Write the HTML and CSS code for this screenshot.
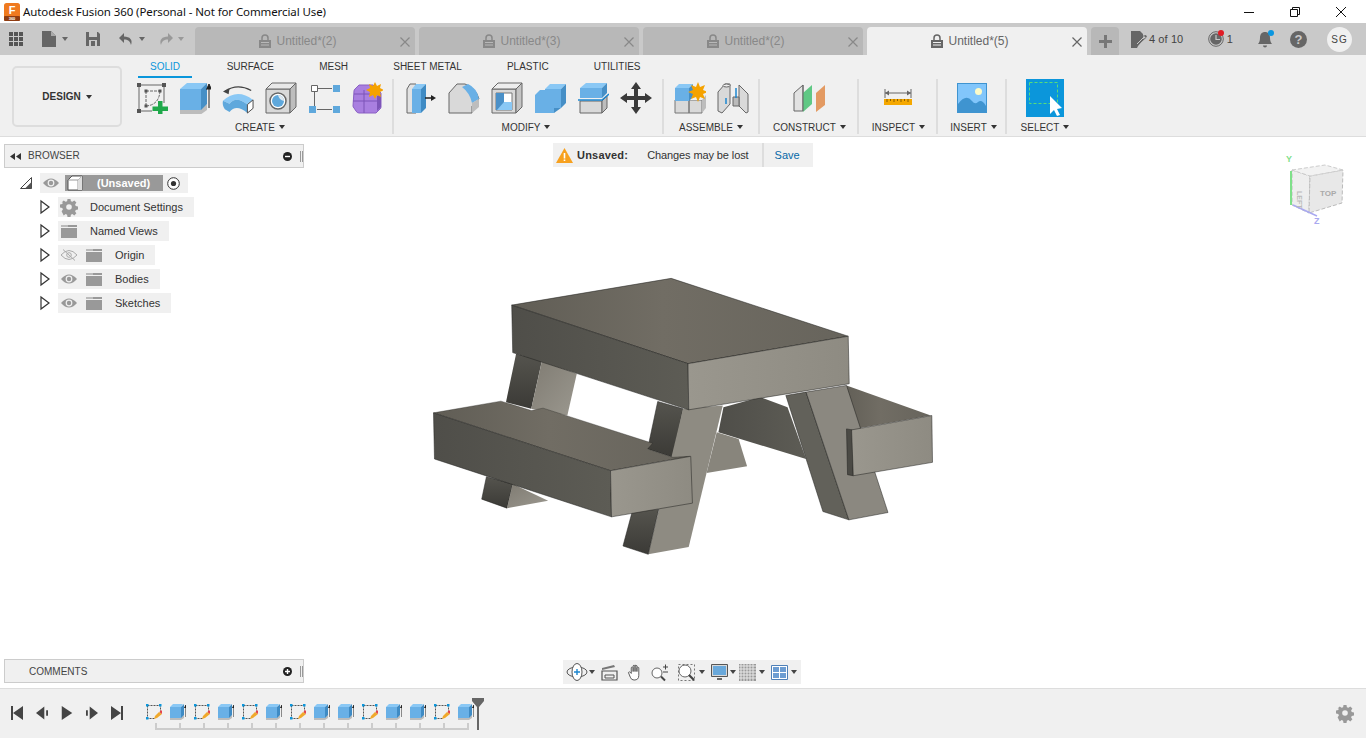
FILE: index.html
```html
<!DOCTYPE html>
<html lang="en">
<head>
<meta charset="utf-8">
<title>Autodesk Fusion 360</title>
<link rel="stylesheet" href="styles.css">
</head>
<body>
<svg class="defs" width="0" height="0" aria-hidden="true">
  <defs>
    <linearGradient id="gTop" x1="0" y1="0" x2="1" y2="0"><stop offset="0" stop-color="#605d55"/><stop offset=".45" stop-color="#716d64"/><stop offset="1" stop-color="#67645c"/></linearGradient>
    <linearGradient id="gSide" x1="0" y1="0" x2="1" y2="0"><stop offset="0" stop-color="#4f4e49"/><stop offset="1" stop-color="#5d5c55"/></linearGradient>
    <linearGradient id="gEnd" x1="0" y1="0" x2="1" y2="0"><stop offset="0" stop-color="#9a978e"/><stop offset="1" stop-color="#8e8b82"/></linearGradient>
    <linearGradient id="gLeg" x1="0" y1="0" x2="0" y2="1"><stop offset="0" stop-color="#55544e"/><stop offset="1" stop-color="#3b3a36"/></linearGradient>
    <linearGradient id="gLegL" x1="0" y1="0" x2="1" y2="1"><stop offset="0" stop-color="#7f7b72"/><stop offset="1" stop-color="#9b988f"/></linearGradient>
    <symbol id="i-sketch" viewBox="0 0 32 32">
      <path d="M3 3h25v18M3 3v26h13" fill="none" stroke="#666"/>
      <path d="M10 9h14M10 9v15M10 24Q23 23 24 9" fill="none" stroke="#666" stroke-dasharray="3 1"/>
      <path d="M1 1h4v4H1zM26 1h4v4h-4zM1 27h4v4H1zM8.500 7.500h3v3h-3zM22.500 7.500h3v3h-3zM8.500 22.500h3v3h-3z" fill="#555"/>
      <path d="M22 19h4.500v5.500H32V29h-5.500v5H22v-5h-5.500v-4.500H22z" fill="#1fa84a"/>
    </symbol>
    <symbol id="i-extrude" viewBox="0 0 32 32">
      <path d="M1 27h20l7-5v6l-7 5H1z" fill="#bcbcbc"/>
      <path d="M1 7h21v21H1z" fill="#69b0e6"/>
      <path d="M1 7l7-6h20l-6 6z" fill="#8ac8f5"/>
      <path d="M22 7l6-6v21l-6 6z" fill="#468fc6"/>
      <path d="M30 26V5M27.500 7.500L30 2l2.500 5.500" fill="#222" stroke="#222"/>
    </symbol>
    <symbol id="i-revolve" viewBox="0 0 34 32">
      <path d="M3 9Q16 0 31 8" fill="none" stroke="#444" stroke-width="1.400"/>
      <path d="M1 9l7-3-1 6z" fill="#444"/>
      <path d="M1 19Q16 5 33 18l-6 5Q15 13 8 22z" fill="#8ac8f5"/>
      <path d="M1 19l7 3Q15 13 27 23v9Q15 22 8 31l-5-3Q0 24 1 19z" fill="#5fa8dc"/>
      <path d="M27 23l6-5v9l-6 5z" fill="#fff" stroke="#444"/>
    </symbol>
    <symbol id="i-hole" viewBox="0 0 32 32">
      <path d="M1 7h24v24H1z" fill="#d9d9d9" stroke="#666"/>
      <path d="M1 7l6-6h24l-6 6z" fill="#e8e8e8" stroke="#666"/>
      <path d="M25 7l6-6v24l-6 6z" fill="#bdbdbd" stroke="#666"/>
      <circle cx="13" cy="19" r="8" fill="#fff" stroke="#666" stroke-width="1.500"/>
      <circle cx="13" cy="19" r="6" fill="#5fa8dc"/>
      <path d="M13 13a6 6 0 0 1 6 6 8 8 0 0 1-6-6z" fill="#dfe9f0"/>
    </symbol>
    <symbol id="i-form" viewBox="0 0 32 32">
      <path d="M3.500 3.500h6v6h-6z" fill="#fff" stroke="#666"/>
      <path d="M25 3h7v7h-7zM1 24h7v7H1zM25 24h7v7h-7z" fill="#5fa8dc"/>
      <path d="M10 6.500h14M6.500 10v14M9 27.500h15" stroke="#666" fill="none"/>
    </symbol>
    <symbol id="i-purple" viewBox="0 0 32 32">
      <path d="M3 9q0-1 1-2l4-4h14l8 8v14q0 1-1 2l-4 4H8q-2 0-3-2l-2-3q-1-1-1-2z" fill="#a97fe0" stroke="#8a60c4"/>
      <path d="M2 19h24M13 8v23M3 12h19" stroke="#7d55b8" fill="none"/>
      <path d="M26 14l4-2v13l-4 4z" fill="#7d55b8"/>
      <path d="M24 0l2 4 4-2-1 4 4 2-4 2 1 5-4-2-2 4-2-4-4 2 1-5-4-2 4-2-1-4 4 2z" fill="#f5a200"/>
    </symbol>
    <symbol id="i-press" viewBox="0 0 32 32">
      <path d="M2 7l3-5h6v29H2z" fill="#e2e2e2" stroke="#666"/>
      <path d="M7 7h9v24H7z" fill="#69b0e6"/>
      <path d="M7 7l4-5h10l-5 5z" fill="#8ac8f5"/>
      <path d="M16 7l5-5v24l-5 5z" fill="#3f8bc4"/>
      <path d="M20 16h7" stroke="#222" stroke-width="1.500"/>
      <path d="M26 13l5 3-5 3z" fill="#222"/>
    </symbol>
    <symbol id="i-fillet" viewBox="0 0 32 32">
      <path d="M1 11L9 2h8Q28 6 31 17l-7 7v7H1z" fill="#d9d9d9" stroke="#666"/>
      <path d="M14 5l6-3q9 4 11 15l-7 4Q22 11 14 5z" fill="#69b0e6"/>
      <path d="M24 21l7-4v8l-7 6z" fill="#bdbdbd"/>
    </symbol>
    <symbol id="i-shell" viewBox="0 0 32 32">
      <path d="M1 7h24v24H1z" fill="#d9d9d9" stroke="#666"/>
      <path d="M1 7l6-6h24l-6 6z" fill="#eee" stroke="#666"/>
      <path d="M25 7l6-6v24l-6 6z" fill="#c4c4c4" stroke="#666"/>
      <path d="M5 11h16v17H5z" fill="#fff" stroke="#777"/>
      <path d="M5 11h8v9h8v8H5z" fill="#4a90c8"/>
      <path d="M13 20h8v8H6z" fill="#8ac8f5"/>
    </symbol>
    <symbol id="i-combine" viewBox="0 0 32 32">
      <path d="M1 13l5-5h14v23H1z" fill="#69b0e6"/>
      <path d="M11 7l5-5h16l-5 5z" fill="#8ac8f5"/>
      <path d="M11 7h16v19H11z" fill="#69b0e6"/>
      <path d="M27 7l5-5v19l-5 5zM20 26h7l-7 5z" fill="#468fc6"/>
    </symbol>
    <symbol id="i-split" viewBox="0 0 32 32">
      <path d="M3 19h22v12H3z" fill="#d9d9d9" stroke="#666"/>
      <path d="M25 19l5-5v12l-5 5z" fill="#bdbdbd" stroke="#666"/>
      <path d="M3 6h22v10H3z" fill="#69b0e6"/>
      <path d="M3 6l6-5h21l-5 5z" fill="#8ac8f5"/>
      <path d="M25 6l5-5v10l-5 5z" fill="#468fc6"/>
      <path d="M1 18h24l7-6" fill="none" stroke="#1c86cf" stroke-width="1.500"/>
    </symbol>
    <symbol id="i-move" viewBox="0 0 32 32">
      <path d="M16 0l5 7h-3v7h7v-3l7 5-7 5v-3h-7v7h3l-5 7-5-7h3v-7H7v3l-7-5 7-5v3h7V7h-3z" fill="#3a3a3a"/>
    </symbol>
    <symbol id="i-component" viewBox="0 0 32 32">
      <path d="M1 18h14v13H1zM15 18h13v13H15z" fill="#d9d9d9" stroke="#777"/>
      <path d="M15 18l4-5h13l-4 5z" fill="#eee"/>
      <path d="M28 18l4-5v13l-4 5z" fill="#bdbdbd"/>
      <path d="M1 6h14v13H1z" fill="#69b0e6"/>
      <path d="M1 6l4-4h14l-4 4z" fill="#8ac8f5"/>
      <path d="M15 6l4-4v13l-4 4z" fill="#468fc6"/>
      <path d="M24 0l2 5 5-2-2 5 5 2-5 2 2 5-5-2-2 5-2-5-5 2 2-5-5-2 5-2-2-5 5 2z" fill="#f5a200"/>
    </symbol>
    <symbol id="i-joint" viewBox="0 0 32 32">
      <path d="M1 10L8 2h5v20l-8 9-4-2z" fill="#d9d9d9" stroke="#666"/>
      <path d="M22 3l9 9v18l-2 1-7-7z" fill="#d9d9d9" stroke="#666"/>
      <ellipse cx="9.500" cy="3.500" rx="3.500" ry="1.500" fill="#eee" stroke="#666"/>
      <path d="M16 15h6v9h-6z" fill="#bbb" stroke="#666"/>
      <path d="M9 16v6M19 6v10" stroke="#1c86cf" stroke-width="1.500"/>
    </symbol>
    <symbol id="i-plane" viewBox="0 0 32 32">
      <path d="M1 11l9-8v26H1z" fill="#e2e2e2" stroke="#666"/>
      <path d="M10 11l9-8v19l-9 8z" fill="#5fc884"/>
      <path d="M23 11l9-8v20l-9 7z" fill="#e39a62"/>
      <path d="M10 3v26" stroke="#666"/>
    </symbol>
    <symbol id="i-measure" viewBox="0 0 28 20">
      <path d="M1 1v9M27 1v9M1 5h26" stroke="#666" fill="none"/>
      <path d="M1 5l4-2.500v5zM27 5l-4-2.500v5z" fill="#666"/>
      <path d="M0 11h28v6H0z" fill="#f5a800"/>
      <path d="M3 11v3M6.500 11v2M10 11v3M13.500 11v2M17 11v3M20.500 11v2M24 11v3" stroke="#8a5c00"/>
    </symbol>
    <symbol id="i-image" viewBox="0 0 30 30">
      <path d="M0 0h30v30H0z" fill="#3f94d0"/>
      <path d="M1 1h28v28H1z" fill="#82c6fb"/>
      <circle cx="21.500" cy="8.500" r="3.500" fill="#fdfbc8"/>
      <path d="M1 21q8-11 14-3 3 4 6 1 4-3 8 4v6H1z" fill="#3f94d0"/>
    </symbol>
    <symbol id="i-select" viewBox="0 0 38 38">
      <path d="M0 0h38v38H0z" fill="#0b96db"/>
      <path d="M3.500 3.500h28v21h-28z" fill="none" stroke="#58dd7a" stroke-dasharray="3 2"/>
      <path d="M24 17l12 12-5 1 3 6-3 1-3-6-4 4z" fill="#fff"/>
    </symbol>
    <symbol id="t-sketch" viewBox="0 0 16 16">
      <path d="M1.500 1.500h13v7M1.500 1.500v13h7" fill="none" stroke="#555" stroke-dasharray="2 1"/>
      <path d="M0 0h2.500v2.500H0zM13 0h2.500v2.500H13zM0 13h2.500v2.500H0z" fill="#0b96db"/>
      <path d="M8 15l1-3 4-4 3 2-5 4z" fill="#f0a92c"/>
      <path d="M13.500 8l2.500 2 1-2-2-2z" fill="#e8434b"/>
    </symbol>
    <symbol id="t-extrude" viewBox="0 0 16 16">
      <path d="M0 13h11l3-2v3l-3 2H0z" fill="#bcbcbc"/>
      <path d="M0 3h11v11H0z" fill="#69b0e6"/>
      <path d="M0 3l3-3h10l-2 3z" fill="#8ac8f5"/>
      <path d="M11 3l3-3v11l-3 3z" fill="#3f8bc4"/>
      <path d="M16 13V2M14.500 4L16 1l1.500 3" fill="#222" stroke="#222"/>
    </symbol>
  </defs>
</svg>

<header class="titlebar">
  <svg class="applogo" viewBox="0 0 18 18"><rect x="1" y="0" width="16" height="18" rx="2.500" fill="#ef7a1f"/><rect x="1" y="13" width="16" height="5" rx="1" fill="#8e3c12"/><text x="9" y="11" class="applogo-f">F</text><text x="9" y="17" class="applogo-n">360</text></svg>
  <span class="titletext">Autodesk Fusion 360 (Personal - Not for Commercial Use)</span>
  <div class="winctl">
    <svg viewBox="0 0 10 10"><path d="M0 5.500h10" stroke="#111"/></svg>
    <svg viewBox="0 0 10 10"><path d="M.5 2.500h7v7h-7zM2.500 2.500v-2h7v7h-2" fill="none" stroke="#111"/></svg>
    <svg viewBox="0 0 10 10"><path d="M0 0l10 10M10 0L0 10" stroke="#111"/></svg>
  </div>
</header>

<nav class="tabbar">
  <div class="apptools">
    <svg class="tool-apps" viewBox="0 0 14 14"><path d="M0 0h4v4H0zM5 0h4v4H5zM10 0h4v4h-4zM0 5h4v4H0zM5 5h4v4H5zM10 5h4v4h-4zM0 10h4v4H0zM5 10h4v4H5zM10 10h4v4h-4z" fill="#555"/></svg>
    <svg class="tool-file" viewBox="0 0 14 16"><path d="M0 0h9l5 5v11H0z" fill="#666"/><path d="M9 0l5 5H9z" fill="#aaa"/></svg>
    <i class="caret caret-tool"></i>
    <svg class="tool-save" viewBox="0 0 14 14"><path d="M0 0h12l2 2v12H0z" fill="#666"/><path d="M3 0h8v5H3zM3 8h8v6H3z" fill="#c9c9c9"/><path d="M5 9h4v5H5z" fill="#666"/></svg>
    <svg class="tool-undo" viewBox="0 0 14 14"><path d="M5 1L0 6l5 5V7.500c4 0 6 1.500 7 5.500 2-5-1-8.500-7-8.500z" fill="#666"/></svg>
    <i class="caret caret-tool caret-undo"></i>
    <svg class="tool-redo" viewBox="0 0 14 14"><path d="M9 1l5 5-5 5V7.500c-4 0-6 1.500-7 5.500-2-5 1-8.500 7-8.500z" fill="#999"/></svg>
    <i class="caret caret-tool caret-redo"></i>
  </div>
  <div class="doctabs">
    <div class="doctab"><svg class="lock" viewBox="0 0 12 14"><path d="M3 6V4a3 3 0 0 1 6 0v2" fill="none" stroke="currentColor" stroke-width="1.500"/><path d="M0 6h12v8H0z" fill="currentColor"/><path d="M2 8.500h8M2 11h8" stroke="#b8b8b8"/></svg><span>Untitled*(2)</span><svg class="tabclose" viewBox="0 0 10 10"><path d="M.5.500l9 9M9.500.500l-9 9" stroke="currentColor" stroke-width="1.200"/></svg></div>
    <div class="doctab"><svg class="lock" viewBox="0 0 12 14"><path d="M3 6V4a3 3 0 0 1 6 0v2" fill="none" stroke="currentColor" stroke-width="1.500"/><path d="M0 6h12v8H0z" fill="currentColor"/><path d="M2 8.500h8M2 11h8" stroke="#b8b8b8"/></svg><span>Untitled*(3)</span><svg class="tabclose" viewBox="0 0 10 10"><path d="M.5.500l9 9M9.500.500l-9 9" stroke="currentColor" stroke-width="1.200"/></svg></div>
    <div class="doctab"><svg class="lock" viewBox="0 0 12 14"><path d="M3 6V4a3 3 0 0 1 6 0v2" fill="none" stroke="currentColor" stroke-width="1.500"/><path d="M0 6h12v8H0z" fill="currentColor"/><path d="M2 8.500h8M2 11h8" stroke="#b8b8b8"/></svg><span>Untitled*(2)</span><svg class="tabclose" viewBox="0 0 10 10"><path d="M.5.500l9 9M9.500.500l-9 9" stroke="currentColor" stroke-width="1.200"/></svg></div>
    <div class="doctab is-active"><svg class="lock" viewBox="0 0 12 14"><path d="M3 6V4a3 3 0 0 1 6 0v2" fill="none" stroke="currentColor" stroke-width="1.500"/><path d="M0 6h12v8H0z" fill="currentColor"/><path d="M2 8.500h8M2 11h8" stroke="#f0f0f0"/></svg><span>Untitled*(5)</span><svg class="tabclose" viewBox="0 0 10 10"><path d="M.5.500l9 9M9.500.500l-9 9" stroke="currentColor" stroke-width="1.200"/></svg></div>
    <div class="newtab"><svg viewBox="0 0 13 13"><path d="M5 0h3v5h5v3H8v5H5V8H0V5h5z" fill="#777"/></svg></div>
  </div>
  <div class="status">
    <svg class="st-docs" viewBox="0 0 16 17"><path d="M0 0h9l3 3v6l-5 6-1 2H0z" fill="#666"/><path d="M11 5l1 3 4-2-1-2zM5 15l1-4 7-6 2 2-7 6z" fill="#666"/><path d="M6 13l6-6" stroke="#c9c9c9"/></svg>
    <span class="st-count">4 of 10</span>
    <div class="st-clock"><svg viewBox="0 0 16 16"><circle cx="8" cy="8" r="7.300" fill="none" stroke="#666"/><circle cx="8" cy="8" r="5.800" fill="#666"/><path d="M8 4v4.500h4" stroke="#c9c9c9" fill="none" stroke-width="1.200"/></svg><i class="dot dot-red"></i></div>
    <span class="st-one">1</span>
    <div class="st-bell"><svg viewBox="0 0 15 17"><path d="M7 1c3 0 5 2 5 6 0 3 1 5 2 6H0c1-1 2-3 2-6 0-4 2-6 5-6z" fill="#666"/><path d="M5 14.500h4c0 1-1 2-2 2s-2-1-2-2z" fill="#666"/></svg><i class="dot dot-blue"></i></div>
    <svg class="st-help" viewBox="0 0 17 17"><circle cx="8.500" cy="8.500" r="8.500" fill="#666"/><text x="8.500" y="13" class="help-q">?</text></svg>
    <div class="avatar">SG</div>
  </div>
</nav>

<section class="ribbon">
  <button class="design">DESIGN<i class="caret caret-design"></i></button>
  <div class="toolarea">
    <div class="rtabs">
      <span class="rtab is-active">SOLID</span><span class="rtab rtab-second">SURFACE</span><span class="rtab">MESH</span><span class="rtab">SHEET METAL</span><span class="rtab">PLASTIC</span><span class="rtab">UTILITIES</span>
    </div>
    <div class="groups">
      <div class="group g-create"><div class="icons">
        <svg class="ic"><use href="#i-sketch"/></svg><svg class="ic"><use href="#i-extrude"/></svg><svg class="ic"><use href="#i-revolve"/></svg><svg class="ic"><use href="#i-hole"/></svg><svg class="ic"><use href="#i-form"/></svg><svg class="ic"><use href="#i-purple"/></svg>
      </div><div class="glabel">CREATE<i class="caret"></i></div></div>
      <div class="group g-modify"><div class="icons">
        <svg class="ic"><use href="#i-press"/></svg><svg class="ic"><use href="#i-fillet"/></svg><svg class="ic"><use href="#i-shell"/></svg><svg class="ic"><use href="#i-combine"/></svg><svg class="ic"><use href="#i-split"/></svg><svg class="ic"><use href="#i-move"/></svg>
      </div><div class="glabel">MODIFY<i class="caret"></i></div></div>
      <div class="group g-assemble"><div class="icons">
        <svg class="ic"><use href="#i-component"/></svg><svg class="ic"><use href="#i-joint"/></svg>
      </div><div class="glabel">ASSEMBLE<i class="caret"></i></div></div>
      <div class="group g-construct"><div class="icons">
        <svg class="ic"><use href="#i-plane"/></svg>
      </div><div class="glabel">CONSTRUCT<i class="caret"></i></div></div>
      <div class="group g-inspect"><div class="icons">
        <svg class="ic-measure"><use href="#i-measure"/></svg>
      </div><div class="glabel">INSPECT<i class="caret"></i></div></div>
      <div class="group g-insert"><div class="icons">
        <svg class="ic-image"><use href="#i-image"/></svg>
      </div><div class="glabel">INSERT<i class="caret"></i></div></div>
      <div class="group g-select"><div class="icons">
        <svg class="ic-select"><use href="#i-select"/></svg>
      </div><div class="glabel">SELECT<i class="caret"></i></div></div>
    </div>
  </div>
</section>

<main class="canvas">
  <aside class="browser">
    <div class="panelhead">
      <svg class="collapse" viewBox="0 0 11 7"><path d="M5 0v7L0 3.500zM11 0v7L6 3.500z" fill="#333"/></svg>
      <span class="panelname">BROWSER</span>
      <svg class="pm" viewBox="0 0 9 9"><circle cx="4.500" cy="4.500" r="4.500" fill="#222"/><path d="M2 4.500h5" stroke="#fff" stroke-width="1.400"/></svg>
      <i class="grip"></i>
    </div>
    <ul class="tree">
      <li class="node node-root">
        <svg class="tri-open" viewBox="0 0 12 12"><path d="M.5 11.500l11-11v11z" fill="#fff" stroke="#444"/><path d="M5 11.500l6.500-6.500v6.500z" fill="#555"/></svg>
        <div class="rootrow">
          <svg class="eye" viewBox="0 0 16 10"><path d="M0 5q8-9 16 0-8 9-16 0z" fill="#999"/><circle cx="8" cy="5" r="3.400" fill="#f0f0f0"/><circle cx="8" cy="5" r="2.200" fill="#999"/></svg>
          <div class="rootname">
            <svg class="cube" viewBox="0 0 16 16"><path d="M1 5l4-4h10v14H1z" fill="#fff" stroke="#555"/><path d="M1 5h10v10M11 5l4-4" fill="none" stroke="#999"/><path d="M11 5l4-4v14h-4z" fill="#ddd"/></svg>
            <b>(Unsaved)</b>
          </div>
          <svg class="radio" viewBox="0 0 13 13"><circle cx="6.500" cy="6.500" r="5.800" fill="#fff" stroke="#333"/><circle cx="6.500" cy="6.500" r="2.600" fill="#333"/></svg>
        </div>
      </li>
      <li class="node">
        <svg class="tri" viewBox="0 0 10 14"><path d="M1 1l8 6-8 6z" fill="#fff" stroke="#333" stroke-width="1.200"/></svg>
        <div class="row"><svg class="gear" viewBox="0 0 16 16"><path d="M6.500 0h3l.4 2.200 1.500.6L13.300 1.500l2.100 2.100-1.300 1.900.6 1.500 2.300.5v3l-2.300.4-.6 1.500 1.300 1.900-2.100 2.100-1.900-1.300-1.500.6-.4 2.300h-3l-.4-2.300-1.500-.6-1.900 1.300L.6 12.300l1.300-1.900-.6-1.500L-1 8.500v-3l2.300-.5.6-1.500L.6 3.600 2.700 1.500 4.600 2.800l1.500-.6z" fill="#999"/><circle cx="8" cy="8" r="2.800" fill="#f0f0f0"/></svg><span class="rowtext">Document Settings</span></div>
      </li>
      <li class="node">
        <svg class="tri" viewBox="0 0 10 14"><path d="M1 1l8 6-8 6z" fill="#fff" stroke="#333" stroke-width="1.200"/></svg>
        <div class="row"><svg class="folder" viewBox="0 0 16 13"><path d="M0 0h7v2H0z" fill="#bbb"/><path d="M0 3h16v10H0z" fill="#999"/><path d="M7 0h9v2H7z" fill="#999"/></svg><span class="rowtext">Named Views</span></div>
      </li>
      <li class="node">
        <svg class="tri" viewBox="0 0 10 14"><path d="M1 1l8 6-8 6z" fill="#fff" stroke="#333" stroke-width="1.200"/></svg>
        <div class="row"><svg class="eye eye-off" viewBox="0 0 16 12"><path d="M0 6q8-9 16 0-8 9-16 0z" fill="none" stroke="#aaa"/><circle cx="8" cy="6" r="2.300" fill="none" stroke="#aaa"/><path d="M2 .5l12 11" stroke="#aaa"/></svg><svg class="folder folder-in" viewBox="0 0 16 13"><path d="M0 0h7v2H0z" fill="#bbb"/><path d="M0 3h16v10H0z" fill="#999"/><path d="M7 0h9v2H7z" fill="#999"/></svg><span class="rowtext">Origin</span></div>
      </li>
      <li class="node">
        <svg class="tri" viewBox="0 0 10 14"><path d="M1 1l8 6-8 6z" fill="#fff" stroke="#333" stroke-width="1.200"/></svg>
        <div class="row"><svg class="eye" viewBox="0 0 16 10"><path d="M0 5q8-9 16 0-8 9-16 0z" fill="#999"/><circle cx="8" cy="5" r="3.400" fill="#f0f0f0"/><circle cx="8" cy="5" r="2.200" fill="#999"/></svg><svg class="folder folder-in" viewBox="0 0 16 13"><path d="M0 0h7v2H0z" fill="#bbb"/><path d="M0 3h16v10H0z" fill="#999"/><path d="M7 0h9v2H7z" fill="#999"/></svg><span class="rowtext">Bodies</span></div>
      </li>
      <li class="node">
        <svg class="tri" viewBox="0 0 10 14"><path d="M1 1l8 6-8 6z" fill="#fff" stroke="#333" stroke-width="1.200"/></svg>
        <div class="row"><svg class="eye" viewBox="0 0 16 10"><path d="M0 5q8-9 16 0-8 9-16 0z" fill="#999"/><circle cx="8" cy="5" r="3.400" fill="#f0f0f0"/><circle cx="8" cy="5" r="2.200" fill="#999"/></svg><svg class="folder folder-in" viewBox="0 0 16 13"><path d="M0 0h7v2H0z" fill="#bbb"/><path d="M0 3h16v10H0z" fill="#999"/><path d="M7 0h9v2H7z" fill="#999"/></svg><span class="rowtext">Sketches</span></div>
      </li>
    </ul>
  </aside>

  <div class="notice">
    <svg class="warn" viewBox="0 0 17 15"><path d="M8.500 0L17 15H0z" fill="#f7a11f"/><path d="M7.700 5h1.600v5.500H7.700zM7.700 11.500h1.600v1.600H7.700z" fill="#fff"/></svg>
    <b class="n-title">Unsaved:</b>
    <span class="n-msg">Changes may be lost</span>
    <span class="n-save">Save</span>
  </div>

  <svg class="model" viewBox="0 0 1563 855" preserveAspectRatio="none" aria-label="Picnic table model">
    <g stroke="#1f1f1c" stroke-width="1.500" stroke-linejoin="round">
      <path d="M285 250l77 20-32 145-75-20z" fill="url(#gLeg)" stroke="none"/>
      <path d="M362 270l103 40-28 125-107-20z" fill="url(#gLegL)" stroke="none"/>
      <path d="M197 618l78 22-17 72-75-27z" fill="url(#gLeg)"/>
      <path d="M275 640l105 50-122 22z" fill="url(#gLegL)" stroke="none"/>
      <path d="M1265 345l250 90-250 45-20-60z" fill="url(#gTop)" stroke="none"/>
      <path d="M900 410l110-30 80 30 55 155-260-80z" fill="url(#gSide)" stroke="none"/>
      <path d="M945 505l25 82-120 20 30-122z" fill="#88857c" stroke="none"/>
      <path d="M1085 375l60-10 127 382-77-25z" fill="#62615a"/>
      <path d="M1145 365l120-20 123 380-116 22z" fill="#8b8880"/>
      <path d="M1265 475l17 3 3 137-17-3z" fill="#4b4a45"/>
      <path d="M1280 478l238-43 2 140-235 40z" fill="url(#gEnd)"/>
      <path d="M705 393l75 22-30 145-75-25z" fill="url(#gLeg)"/>
      <path d="M780 415l118-10-101 423-120 22z" fill="#8e8b82" stroke="none"/>
      <path d="M630 720l78-5-31 135-75-25z" fill="url(#gLeg)"/>
      <path d="M40 427l200-35 90 28 35-7 325 105-15 17 75 25 50-3-235 43z" fill="url(#gTop)" stroke-width="1"/>
      <path d="M40 427l525 173 3 138L43 565z" fill="url(#gSide)"/>
      <path d="M565 600l238-43 5 140-240 41z" fill="url(#gEnd)"/>
      <path d="M272 105L745 25l525 173-475 82z" fill="url(#gTop)"/>
      <path d="M272 105l523 175 2 138-522-171z" fill="url(#gSide)"/>
      <path d="M795 280l475-82 3 142-476 78z" fill="url(#gEnd)"/>
    </g>
  </svg>

  <svg class="viewcube" viewBox="0 0 90 80" aria-label="View cube">
    <path d="M22 20l18 6-1 37-17-8z" fill="#eee" stroke="#bbb" stroke-dasharray="4 2"/>
    <path d="M40 26l33-6-1 33-33 10z" fill="#e8e8e8" stroke="#bbb" stroke-dasharray="4 2"/>
    <path d="M22 20l33-5 18 5-33 6z" fill="#f2f2f2" stroke="#ccc" stroke-dasharray="4 2"/>
    <path d="M21 21v34" stroke="#7fe08a" stroke-width="2"/>
    <path d="M23 55l24 11" stroke="#a9a9f0" stroke-width="1.500"/>
    <text x="50" y="46" class="vc-top">TOP</text>
    <text x="29" y="41" class="vc-left">LEFT</text>
    <text x="16" y="12" class="vc-y">Y</text>
    <text x="44" y="74" class="vc-z">Z</text>
  </svg>

  <div class="navbar">
    <svg class="nv nv-orbit" viewBox="0 0 22 18"><ellipse cx="11" cy="9" rx="10" ry="5" fill="none" stroke="#555"/><ellipse cx="11" cy="9" rx="5" ry="8.500" fill="#fff" stroke="#555"/><path d="M8 9h6M11 6v6" stroke="#1c86cf" stroke-width="1.400"/></svg><i class="caret nc nc-orbit"></i>
    <svg class="nv nv-pan" viewBox="0 0 17 17"><path d="M1 7h15v9H1z" fill="none" stroke="#555" stroke-width="1.200"/><path d="M4 11h9v3H4z" fill="none" stroke="#555"/><path d="M1 6l13-3-1-2L1 4z" fill="#777"/></svg>
    <svg class="nv nv-hand" viewBox="0 0 17 18"><path d="M4 10V4q1-2 2 0v4V2q1-2 2 0v6V2q1-2 2 0v6V4q1-2 2 0v8q0 5-5 5-3 0-4-3L1 9q1-2 3 1z" fill="#fff" stroke="#555"/></svg>
    <svg class="nv nv-zoom" viewBox="0 0 17 17"><circle cx="6" cy="9" r="5" fill="#fff" stroke="#666"/><path d="M10 12.500l4 4" stroke="#444" stroke-width="2"/><path d="M12 3h5M14.500.500v5M12 8h5" stroke="#444"/></svg>
    <svg class="nv nv-fit" viewBox="0 0 17 17"><path d="M.5.500h16v16H.5z" fill="none" stroke="#777" stroke-dasharray="2 2"/><circle cx="7" cy="7" r="6" fill="#fff" stroke="#666"/><path d="M11 11l5 5" stroke="#444" stroke-width="2.200"/></svg><i class="caret nc nc-fit"></i>
    <svg class="nv nv-disp" viewBox="0 0 17 17"><path d="M.5.500h16v12H.5z" fill="#d8d8d8" stroke="#555"/><path d="M2 2h13v9H2z" fill="#69a8da"/><path d="M6 14h5v2H6z" fill="#666"/></svg><i class="caret nc nc-disp"></i>
    <svg class="nv nv-grid" viewBox="0 0 17 17"><path d="M0 0h17v17H0z" fill="#999"/><path d="M2 0v17M5 0v17M8 0v17M11 0v17M14 0v17M0 2h17M0 5h17M0 8h17M0 11h17M0 14h17" stroke="#e8e8e8"/></svg><i class="caret nc nc-grid"></i>
    <svg class="nv nv-views" viewBox="0 0 17 15"><path d="M.5.500h16v14H.5z" fill="#fff" stroke="#4f80b8"/><path d="M2 2h6v5H2zM9 2h6v5H9zM2 8h6v5H2zM9 8h6v5H9z" fill="#6d9dd2"/></svg><i class="caret nc nc-views"></i>
  </div>

  <aside class="comments">
    <div class="panelhead panelhead-c">
      <span class="panelname">COMMENTS</span>
      <svg class="pm" viewBox="0 0 9 9"><circle cx="4.500" cy="4.500" r="4.500" fill="#222"/><path d="M2 4.500h5M4.500 2v5" stroke="#fff" stroke-width="1.400"/></svg>
      <i class="grip"></i>
    </div>
  </aside>
</main>

<footer class="timeline">
  <div class="playback">
    <svg viewBox="0 0 12 14"><path d="M0 0h2v14H0zM12 0v14L2 7z" fill="#444"/></svg>
    <svg viewBox="0 0 13 14"><path d="M9 0v14L0 7zM11 4h2v6h-2z" fill="#444"/></svg>
    <svg viewBox="0 0 12 16"><path d="M0 0l12 8-12 8z" fill="#444"/></svg>
    <svg viewBox="0 0 13 14"><path d="M4 0v14l9-7zM0 4h2v6H0z" fill="#444"/></svg>
    <svg viewBox="0 0 12 14"><path d="M10 0h2v14h-2zM0 0v14l10-7z" fill="#444"/></svg>
  </div>
  <div class="track">
    <div class="steps">
      <svg class="step"><use href="#t-sketch"/></svg><svg class="step"><use href="#t-extrude"/></svg><svg class="step"><use href="#t-sketch"/></svg><svg class="step"><use href="#t-extrude"/></svg><svg class="step"><use href="#t-sketch"/></svg><svg class="step"><use href="#t-extrude"/></svg><svg class="step"><use href="#t-sketch"/></svg><svg class="step"><use href="#t-extrude"/></svg><svg class="step"><use href="#t-extrude"/></svg><svg class="step"><use href="#t-sketch"/></svg><svg class="step"><use href="#t-extrude"/></svg><svg class="step"><use href="#t-extrude"/></svg><svg class="step"><use href="#t-sketch"/></svg><svg class="step"><use href="#t-extrude"/></svg>
    </div>
    <div class="rail"><i></i><i></i><i></i><i></i><i></i><i></i><i></i><i></i><i></i><i></i><i></i><i></i><i></i></div>
    <svg class="marker" viewBox="0 0 12 32"><path d="M0 0h12v3L7 9v23H5V9L0 3z" fill="#666"/></svg>
  </div>
  <svg class="tl-gear" viewBox="-1 -1 18 18"><path d="M6.500 0h3l.4 2.200 1.500.6L13.300 1.500l2.100 2.100-1.300 1.900.6 1.500 2.300.5v3l-2.300.4-.6 1.500 1.300 1.900-2.100 2.100-1.900-1.300-1.500.6-.4 2.300h-3l-.4-2.300-1.500-.6-1.900 1.300L.6 12.300l1.300-1.900-.6-1.500L-1 8.500v-3l2.300-.5.6-1.500L.6 3.600 2.700 1.500 4.600 2.800l1.500-.6z" fill="#999"/><circle cx="8" cy="8" r="2.800" fill="#f0f0f0"/></svg>
</footer>
</body>
</html>
```

FILE: styles.css
```css
* { box-sizing: border-box; }
html, body { margin: 0; height: 100%; }
body {
  width: 1366px;
  height: 738px;
  overflow: hidden;
  display: flex;
  flex-direction: column;
  background: #fff;
  color: #333;
  font-family: "Liberation Sans", Arial, sans-serif;
  font-size: 11px;
}
.defs { position: absolute; }
svg { display: block; flex: none; overflow: visible; }
i { display: block; flex: none; }

.caret {
  display: inline-block;
  width: 0;
  height: 0;
  border-left: 3.500px solid transparent;
  border-right: 3.500px solid transparent;
  border-top: 4px solid #333;
}

/* Title bar */
.titlebar { height: 23px; flex: none; display: flex; align-items: center; background: #fff; padding-left: 3px; }
.applogo { width: 18px; height: 18px; }
.applogo-f { font: bold 11px "Liberation Sans", sans-serif; fill: #fff; text-anchor: middle; }
.applogo-n { font: bold 4px "Liberation Sans", sans-serif; fill: #fff; text-anchor: middle; }
.titletext { margin-left: 2px; font: 11.500px "Noto Sans", sans-serif; color: #111; letter-spacing: -.1px; white-space: nowrap; }
.winctl { margin-left: auto; display: flex; gap: 36px; padding-right: 20px; }
.winctl svg { width: 10px; height: 10px; }

/* Tab bar */
.tabbar { height: 32px; flex: none; display: flex; background: #c9c9c9; }
.apptools { width: 195px; flex: none; display: flex; align-items: center; padding-left: 9px; }
.tool-apps { width: 14px; height: 14px; }
.tool-file { width: 14px; height: 16px; margin-left: 19px; }
.caret-tool { border-top-color: #666; margin-left: 6px; }
.tool-save { width: 14px; height: 14px; margin-left: 18px; }
.tool-undo { width: 14px; height: 14px; margin-left: 19px; }
.caret-undo { margin-left: 6px; }
.tool-redo { width: 14px; height: 14px; margin-left: 14px; }
.caret-redo { margin-left: 5px; border-top-color: #999; }

.doctabs { display: flex; align-items: flex-end; gap: 4px; }
.doctab {
  position: relative;
  width: 220px;
  height: 28px;
  display: flex;
  align-items: center;
  justify-content: center;
  gap: 5px;
  padding-right: 14px;
  background: #b8b8b8;
  color: #888;
  border-radius: 4px 4px 0 0;
  font-size: 12px;
}
.doctab.is-active { background: #f0f0f0; color: #666; }
.lock { width: 12px; height: 14px; }
.tabclose { position: absolute; right: 5px; top: 10px; width: 10px; height: 10px; }
.newtab { width: 28px; height: 28px; background: #b8b8b8; border-radius: 4px 4px 0 0; display: flex; align-items: center; justify-content: center; }
.newtab svg { width: 13px; height: 13px; }

.status { flex: 1; display: flex; align-items: center; color: #444; font-size: 11px; padding-left: 12px; }
.st-docs { width: 16px; height: 17px; }
.st-count { margin-left: 2px; letter-spacing: .1px; }
.st-clock { position: relative; margin-left: 24.500px; }
.st-clock svg { width: 16px; height: 16px; }
.dot { position: absolute; width: 6px; height: 6px; border-radius: 50%; }
.dot-red { background: #e01b24; right: 0; top: -1px; }
.dot-blue { background: #0a96e0; right: -1px; top: -1px; }
.st-one { margin-left: 3px; }
.st-bell { position: relative; margin-left: 25px; }
.st-bell svg { width: 15px; height: 17px; }
.st-help { width: 17px; height: 17px; margin-left: 17px; }
.help-q { font: bold 13px "Liberation Sans", sans-serif; fill: #c9c9c9; text-anchor: middle; }
.avatar { width: 25px; height: 25px; margin-left: 20px; border-radius: 50%; background: #f0f0f0; color: #444; font-size: 10px; letter-spacing: 1px; display: flex; align-items: center; justify-content: center; }

/* Ribbon */
.ribbon { height: 82px; flex: none; display: flex; background: #f0f0f0; border-bottom: 1px solid #ddd; }
.design {
  width: 110px;
  height: 61px;
  margin: 11px 0 0 12px;
  background: #f0f0f0;
  border: 2px solid #ddd;
  border-radius: 5px;
  color: #333;
  font: bold 10px "Liberation Sans", sans-serif;
  display: flex;
  align-items: center;
  justify-content: center;
  gap: 5px;
  padding: 0;
}
.toolarea { margin-left: 4px; display: flex; flex-direction: column; }
.rtabs { height: 23px; padding-left: 12px; display: flex; gap: 21.200px; font-size: 10px; }
.rtab { padding: 0 12px; height: 23px; line-height: 24px; color: #333; white-space: nowrap; }
.rtab-second { margin-left: 1.500px; }
.rtab.is-active { color: #0a96db; border-bottom: 2px solid #0a96db; }
.groups { display: flex; height: 56px; margin-top: 1px; }
.group { height: 55px; display: flex; flex-direction: column; align-items: center; border-right: 2px solid #ddd; }
.g-create { width: 268px; }
.g-modify { width: 270px; }
.g-assemble { width: 96px; }
.g-construct { width: 99px; }
.g-inspect { width: 79px; }
.g-insert { width: 69px; }
.g-select { width: 76px; border-right: 0; }
.g-create .glabel { margin-left: 2px; }
.g-modify .glabel { margin-left: -4px; }
.g-construct .glabel { margin-left: 2px; }
.g-inspect .glabel { margin-left: 2px; }
.g-insert .glabel { margin-left: 4px; }
.icons { height: 38px; display: flex; align-items: center; justify-content: center; gap: 11px; }
.ic { width: 32px; height: 32px; }
.ic-measure { width: 28px; height: 20px; }
.ic-image { width: 30px; height: 30px; }
.ic-select { width: 38px; height: 38px; }
.glabel { margin-top: 3px; height: 14px; display: flex; align-items: center; gap: 4px; font-size: 10px; color: #333; white-space: nowrap; }

/* Canvas */
.canvas { position: relative; flex: 1; background: #fff; overflow: hidden; }
.panelhead { height: 24px; display: flex; align-items: center; background: #f0f0f0; border: 1px solid #ccc; padding-left: 5px; }
.collapse { width: 11px; height: 7px; }
.panelname { margin-left: 7px; font-size: 10px; color: #444; }
.browser .panelname { padding-bottom: 2px; }
.panelhead-c .panelname { margin-left: 19px; }
.pm { width: 9px; height: 9px; margin-left: auto; }
.grip { width: 3px; height: 11px; margin: 0 0 0 8px; border: 1px solid #999; border-width: 0 1px; }

.browser { position: absolute; left: 4px; top: 7px; width: 300px; }
.tree { list-style: none; margin: 3px 0 0; padding: 0; }
.node { height: 24px; display: flex; align-items: center; padding-left: 36px; }
.tri { width: 10px; height: 14px; }
.row { margin-left: 8px; height: 20px; display: flex; align-items: center; background: #f0f0f0; padding: 0 11px 0 3px; color: #333; }
.rowtext { margin-left: 13px; white-space: nowrap; }
.gear { width: 16px; height: 16px; }
.folder { width: 16px; height: 13px; }
.folder-in { margin-left: 9px; }
.eye { width: 16px; height: 10px; }
.eye-off { height: 12px; }
.node-root { padding-left: 16px; }
.tri-open { width: 12px; height: 12px; }
.rootrow { margin-left: 8px; height: 20px; width: 148px; display: flex; align-items: center; background: #f0f0f0; padding-left: 3px; }
.rootname { margin-left: 6px; width: 98px; height: 16px; background: #999; display: flex; align-items: center; color: #fff; }
.cube { width: 16px; height: 16px; margin-left: 2px; }
.rootname b { margin-left: 14px; white-space: nowrap; }
.radio { width: 13px; height: 13px; margin-left: 4px; }

.notice { position: absolute; left: 553px; top: 6px; width: 260px; height: 24px; background: #f0f0f0; display: flex; align-items: center; padding-left: 3px; }
.warn { width: 17px; height: 15px; }
.n-title { margin-left: 4px; color: #333; letter-spacing: .2px; }
.n-msg { margin-left: 19px; color: #333; white-space: nowrap; letter-spacing: -.1px; }
.n-save { margin-left: 13px; padding-left: 11px; height: 24px; line-height: 24px; border-left: 2px solid #ddd; color: #0668a8; }

.model { position: absolute; left: 420px; top: 133px; width: 527px; height: 286px; }
.viewcube { position: absolute; left: 1270px; top: 13px; width: 90px; height: 80px; }
.vc-top { font: bold 8px "Liberation Sans", sans-serif; fill: #aaa; }
.vc-left { font: bold 7px "Liberation Sans", sans-serif; fill: #bbb; writing-mode: vertical-rl; }
.vc-y { font: bold 9px "Liberation Sans", sans-serif; fill: #7fe08a; }
.vc-z { font: bold 9px "Liberation Sans", sans-serif; fill: #a9a9f0; }

.navbar { position: absolute; left: 563px; top: 523px; width: 238px; height: 24px; background: #f0f0f0; display: flex; align-items: center; padding-left: 3px; }
.nv { width: 17px; height: 17px; }
.nv-orbit { width: 22px; height: 18px; }
.nc { border-top-color: #444; }
.nc-orbit { margin-left: 1px; }
.nv-pan { margin-left: 6px; }
.nv-hand { margin-left: 9px; }
.nv-zoom { margin-left: 7px; }
.nv-fit { margin-left: 10px; }
.nc-fit { margin-left: 4px; }
.nv-disp { margin-left: 6px; }
.nc-disp { margin-left: 2px; }
.nv-grid { margin-left: 3px; }
.nc-grid { margin-left: 3px; }
.nv-views { margin-left: 6px; height: 15px; }
.nc-views { margin-left: 3px; }

.comments { position: absolute; left: 4px; top: 522px; width: 300px; }

/* Timeline */
.timeline { position: relative; height: 50px; flex: none; background: #f0f0f0; border-top: 1px solid #ddd; display: flex; align-items: flex-start; }
.playback { margin: 16px 0 0 11px; width: 112px; display: flex; align-items: center; justify-content: space-between; height: 16px; }
.playback svg { width: 12px; height: 14px; }
.track { position: relative; margin: 15px 0 0 23px; }
.steps { display: flex; gap: 8px; }
.step { width: 16px; height: 16px; }
.rail { display: flex; width: 314px; margin: 3px 0 0 9px; height: 7px; border-right: 2px solid #ccc; border-bottom: 2px solid #ccc; }
.rail i { width: 24px; height: 5px; border-left: 2px solid #ccc; }
.marker { position: absolute; left: 326px; top: -6px; width: 12px; height: 32px; }
.tl-gear { position: absolute; right: 12px; top: 15px; width: 18px; height: 18px; }
```
